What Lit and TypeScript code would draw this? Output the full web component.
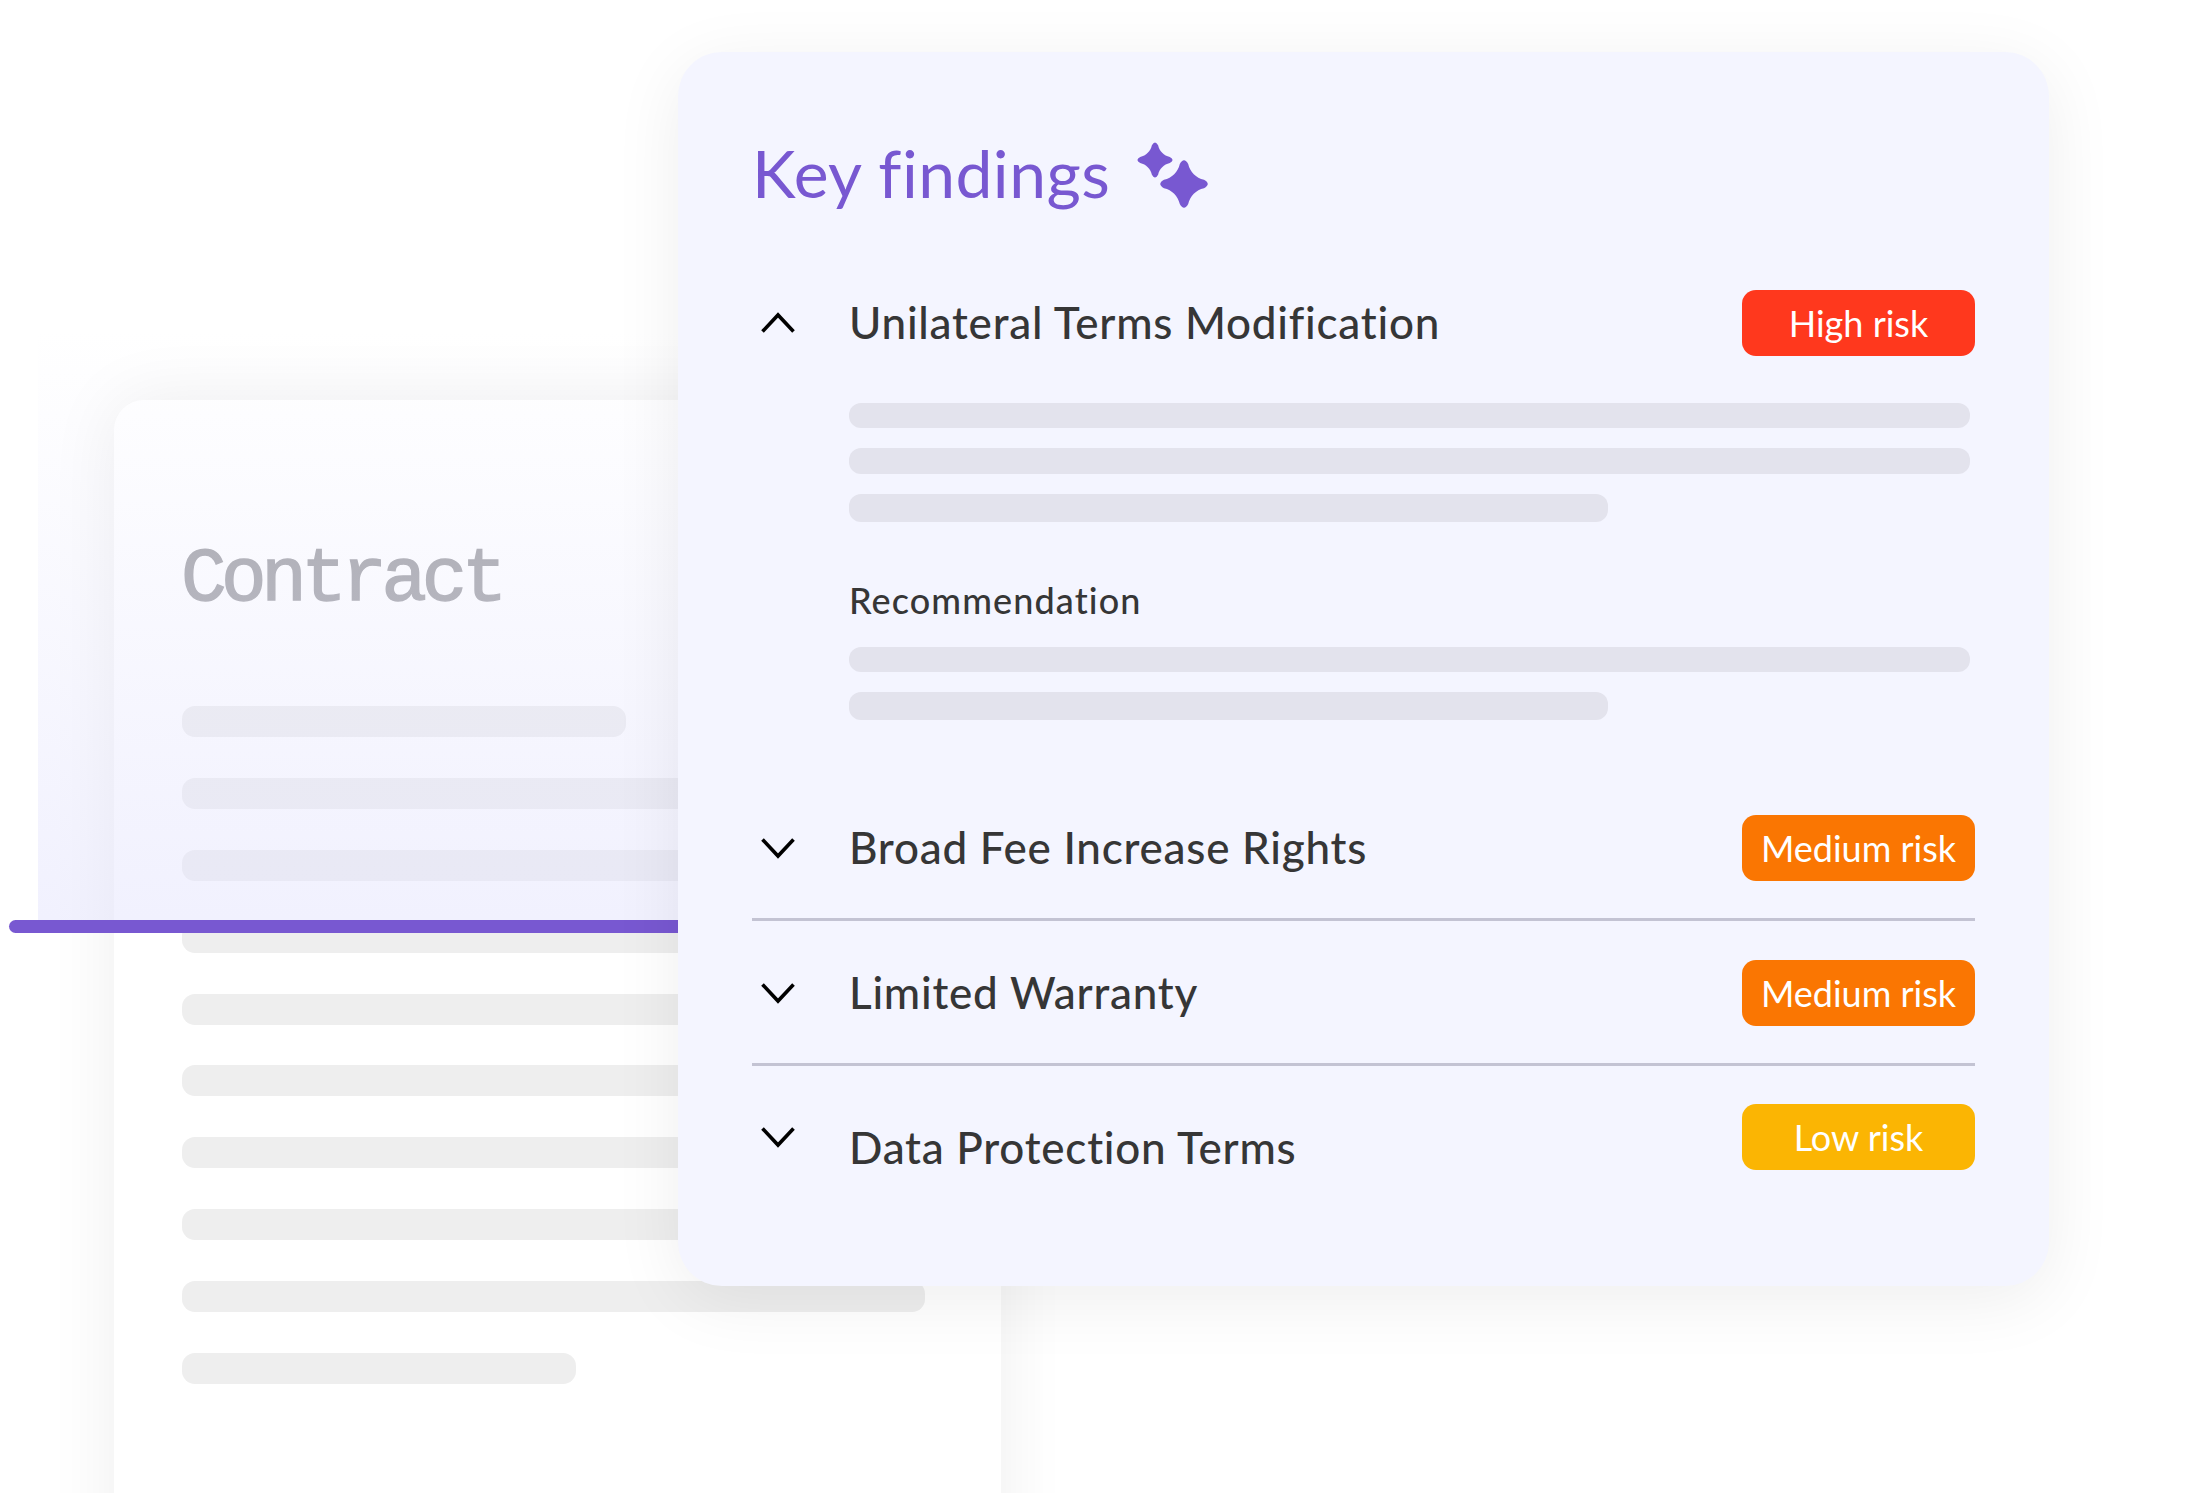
import { LitElement, html, css, svg } from "lit";
import { customElement } from "lit/decorators.js";

const STAR =
  "M-4.2 -20Q0 -27.5 4.2 -20C6 -12 12 -6 20 -4.2Q27.5 0 20 4.2C12 6 6 12 4.2 20Q0 27.5 -4.2 20C-6 12 -12 6 -20 4.2Q-27.5 0 -20 -4.2C-12 -6 -6 -12 -4.2 -20Z";

const chevron = (up: boolean) => html`<svg class="chev" viewBox="0 0 36 22" width="36" height="22" aria-hidden="true">
  ${svg`<polyline points=${up ? "2.5,19.5 18,3 33.5,19.5" : "2.5,2.5 18,19 33.5,2.5"} fill="none" stroke="#000" stroke-width="3.6" />`}
</svg>`;

@customElement("app-root")
export class AppRoot extends LitElement {
  static styles = css`
    :host {
      display: block;
      position: relative;
      box-sizing: border-box;
      width: 2189px;
      height: 1493px;
      padding: 400px 0 0 114px;
      overflow: hidden;
      background: #fff;
      font-family: "Lato", "Liberation Sans", sans-serif;
      font-variant-ligatures: none;
    }
    .doc {
      box-sizing: border-box;
      width: 887px;
      height: 1200px;
      padding: 140px 68px 0;
      border-radius: 30px 30px 0 0;
      background: #fff;
      box-shadow: 0 0 70px rgba(0, 0, 0, 0.07);
    }
    .doc-title {
      height: 80px;
      margin: 0 0 86px -1px;
      font: 400 76px/80px "Liberation Mono", monospace;
      letter-spacing: -5.5px;
      -webkit-text-stroke: 1.4px #a7a7ab;
      color: #a7a7ab;
    }
    .doc-lines {
      display: flex;
      flex-direction: column;
      align-items: flex-start;
      gap: 40.9px;
    }
    .doc-line {
      width: 743px;
      height: 31px;
      border-radius: 13px;
      background: #eee;
    }
    .doc-line.mid {
      width: 444px;
    }
    .doc-line.short {
      width: 394px;
    }
    .scan {
      position: absolute;
      left: 38px;
      top: 330px;
      width: 800px;
      height: 591px;
      background: linear-gradient(to bottom, rgba(227, 227, 253, 0), rgba(227, 227, 253, 0.5));
    }
    .scan-line {
      position: absolute;
      left: 9px;
      top: 920px;
      width: 800px;
      height: 13px;
      border-radius: 6.5px;
      background: #7858d1;
    }
    .card {
      position: absolute;
      box-sizing: border-box;
      left: 678px;
      top: 52px;
      width: 1371px;
      height: 1234px;
      padding: 83px 74px 0;
      border-radius: 44px;
      background: #f4f5ff;
      box-shadow: 0 14px 70px rgba(0, 0, 0, 0.07);
    }
    .heading {
      display: flex;
      align-items: center;
      gap: 27px;
      height: 80px;
      margin-bottom: 75px;
    }
    .heading h1 {
      margin: 0 0 4px;
      font: 400 66px/80px "Lato", sans-serif;
      letter-spacing: 0.45px;
      color: #7858d1;
    }
    .item {
      padding: 39px 0 37px;
      border-bottom: 3px solid #c3c3d3;
    }
    .item.open {
      padding: 0 0 95px;
      border-bottom: 0;
      margin-bottom: -39px;
    }
    .item.last {
      padding: 38px 0 0;
      border-bottom: 0;
    }
    .row {
      display: grid;
      grid-template-columns: 96px 1fr 233px;
      grid-template-rows: 66px;
      align-items: center;
    }
    .chev {
      display: block;
      margin-left: 8px;
    }
    .title {
      margin: 0 0 2px 1px;
      font: 500 44px/50px "Lato", sans-serif;
      letter-spacing: 0.75px;
      color: #363636;
    }
    .title.low {
      padding-top: 22px;
    }
    .badge {
      display: flex;
      align-items: center;
      justify-content: center;
      height: 66px;
      border-radius: 14px;
      color: #fff;
      font: 400 36px/1 "Lato", sans-serif;
    }
    .high { background: #ff381d; }
    .medium { background: #fa7602; }
    .low-risk { background: #fbb503; }
    .body {
      width: 1121px;
      margin: 47px 0 0 97px;
      display: flex;
      flex-direction: column;
      gap: 20px;
    }
    .bar {
      height: 25px;
      border-radius: 12px;
      background: #e3e3ed;
    }
    .bar.mid {
      height: 26px;
    }
    .bar.short {
      width: 759px;
      height: 28px;
    }
    .rec {
      margin: 38px 0 7px;
      font: 500 36px/40px "Lato", sans-serif;
      letter-spacing: 1.1px;
      color: #363636;
    }
  `;

  private docLines = ["mid", "", "", "", "", "", "", "", "", "short"];

  private row(title: string, risk: string, cls: string, up = false, low = false) {
    return html`<div class="row">
      ${chevron(up)}
      <h2 class="title ${low ? "low" : ""}">${title}</h2>
      <span class="badge ${cls}">${risk}</span>
    </div>`;
  }

  render() {
    return html`
      <section class="doc">
        <h2 class="doc-title">Contract</h2>
        <div class="doc-lines">
          ${this.docLines.map((c) => html`<div class="doc-line ${c}"></div>`)}
        </div>
      </section>
      <div class="scan"></div>
      <div class="scan-line"></div>
      <section class="card">
        <header class="heading">
          <h1>Key findings</h1>
          <svg width="71" height="66" viewBox="0 0 71 66" aria-hidden="true">
            <path d=${STAR} fill="#7858d1" transform="translate(18 18) scale(.74)" />
            <path d=${STAR} fill="#7858d1" transform="translate(47 42)" />
          </svg>
        </header>
        <div class="item open">
          ${this.row("Unilateral Terms Modification", "High risk", "high", true)}
          <div class="body">
            <div class="bar"></div>
            <div class="bar mid"></div>
            <div class="bar short"></div>
            <div class="rec">Recommendation</div>
            <div class="bar"></div>
            <div class="bar short"></div>
          </div>
        </div>
        <div class="item">${this.row("Broad Fee Increase Rights", "Medium risk", "medium")}</div>
        <div class="item">${this.row("Limited Warranty", "Medium risk", "medium")}</div>
        <div class="item last">${this.row("Data Protection Terms", "Low risk", "low-risk", false, true)}</div>
      </section>
    `;
  }
}
